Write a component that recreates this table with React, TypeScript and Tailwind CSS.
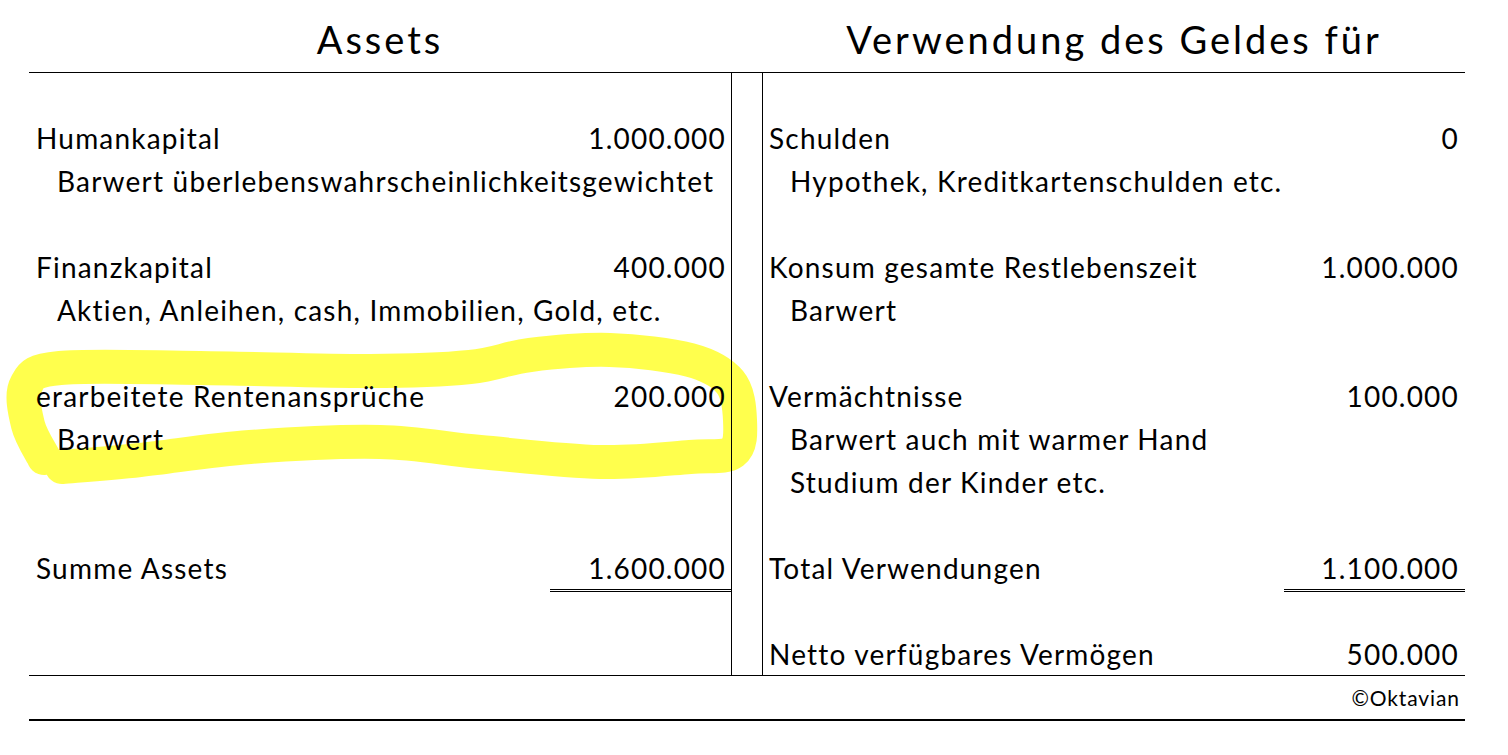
type Row = { label?: string; value?: string; sub?: boolean; total?: boolean };

const assets: Row[] = [
  {},
  { label: "Humankapital", value: "1.000.000" },
  { label: "Barwert überlebenswahrscheinlichkeitsgewichtet", sub: true },
  {},
  { label: "Finanzkapital", value: "400.000" },
  { label: "Aktien, Anleihen, cash, Immobilien, Gold, etc.", sub: true },
  {},
  { label: "erarbeitete Rentenansprüche", value: "200.000" },
  { label: "Barwert", sub: true },
  {},
  {},
  { label: "Summe Assets", value: "1.600.000", total: true },
  {},
  {},
];

const uses: Row[] = [
  {},
  { label: "Schulden", value: "0" },
  { label: "Hypothek, Kreditkartenschulden etc.", sub: true },
  {},
  { label: "Konsum gesamte Restlebenszeit", value: "1.000.000" },
  { label: "Barwert", sub: true },
  {},
  { label: "Vermächtnisse", value: "100.000" },
  { label: "Barwert auch mit warmer Hand", sub: true },
  { label: "Studium der Kinder etc.", sub: true },
  {},
  { label: "Total Verwendungen", value: "1.100.000", total: true },
  {},
  { label: "Netto verfügbares Vermögen", value: "500.000" },
];

// freehand marker loop around "erarbeitete Rentenansprüche"
const loop: [number, number][] = [
  [44, 458], [28, 425], [26, 385], [60, 368], [200, 368], [370, 371],
  [470, 367], [530, 355], [610, 350], [690, 360], [730, 382], [740, 420],
  [733, 452], [690, 457], [600, 462], [480, 452], [380, 442], [250, 447],
  [140, 460], [62, 467],
];

function smoothPath(pts: [number, number][]) {
  let d = `M ${pts[0][0]} ${pts[0][1]}`;
  for (let i = 0; i < pts.length - 1; i++) {
    const p0 = pts[i - 1] || pts[i];
    const p1 = pts[i];
    const p2 = pts[i + 1];
    const p3 = pts[i + 2] || p2;
    const c1x = p1[0] + (p2[0] - p0[0]) / 6;
    const c1y = p1[1] + (p2[1] - p0[1]) / 6;
    const c2x = p2[0] - (p3[0] - p1[0]) / 6;
    const c2y = p2[1] - (p3[1] - p1[1]) / 6;
    d += ` C ${c1x} ${c1y} ${c2x} ${c2y} ${p2[0]} ${p2[1]}`;
  }
  return d;
}

function Column({ rows, padL, padSub, padR }: { rows: Row[]; padL: string; padSub: string; padR: string }) {
  return (
    <div className="w-[702px] flex flex-col">
      {rows.map((r, i) => (
        <div key={i} className="flex h-[43px] items-center justify-between">
          <span className={r.sub ? padSub : padL}>{r.label}</span>
          {r.value &&
            (r.total ? (
              <span className={`self-start h-[46px] w-[181px] flex items-center justify-end border-b-[3px] border-double border-black ${padR}`}>
                {r.value}
              </span>
            ) : (
              <span className={padR}>{r.value}</span>
            ))}
        </div>
      ))}
    </div>
  );
}

export default function App() {
  return (
    <div className="relative w-[1508px] h-[755px] bg-white text-black font-['Lato',sans-serif] overflow-hidden">
      <svg className="absolute left-0 top-0" width="1508" height="755">
        <path
          d={smoothPath(loop)}
          fill="none"
          stroke="#ffff4d"
          strokeWidth="34"
          strokeLinecap="round"
          strokeLinejoin="round"
        />
      </svg>
      <div className="relative ml-[29px] w-[1436px] text-[28px] tracking-[1.2px] leading-none">
        <div className="flex h-[73px] border-b border-black text-[38px] tracking-[3px]">
          <div className="w-[702px] flex justify-center pt-[20px]">Assets</div>
          <div className="w-[32px]" />
          <div className="w-[702px] flex justify-center pt-[20px]">Verwendung des Geldes für</div>
        </div>
        <div className="flex border-b border-black">
          <Column rows={assets} padL="pl-[7px]" padSub="pl-[28px]" padR="pr-[5px]" />
          <div className="w-[32px] border-x border-black" />
          <Column rows={uses} padL="pl-[6px]" padSub="pl-[27px]" padR="pr-[6px]" />
        </div>
        <div className="flex h-[45px] items-center justify-end border-b-2 border-black pr-[5px] text-[21px] tracking-[0.9px]">
          ©Oktavian
        </div>
      </div>
    </div>
  );
}
